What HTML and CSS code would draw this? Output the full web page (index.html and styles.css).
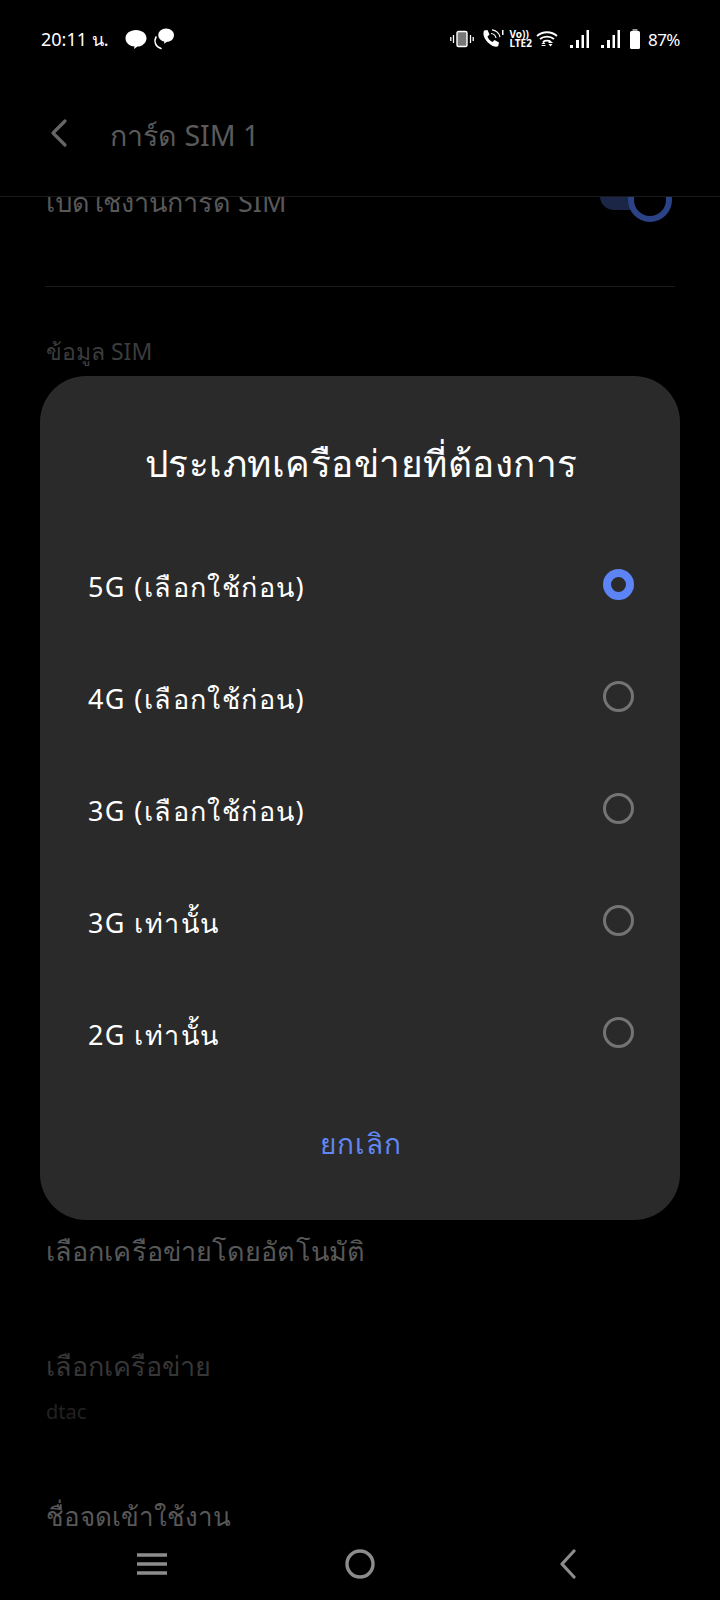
FILE: index.html
```html
<!DOCTYPE html>
<html lang="th">

<head>
    <meta charset="UTF-8">
    <meta name="viewport" content="width=device-width, initial-scale=1.0">
    <title>การ์ด SIM 1</title>
    <link rel="stylesheet" href="styles.css">
</head>

<body>
    <div class="screen">
        <div class="status">
            <div class="status-left">
                <span class="clock">20:11 น.</span>
                <svg class="bubble" width="26" height="24" viewBox="0 0 26 24">
                    <path d="M13 3c6 0 10.500 3.600 10.500 8.200S19 19.500 14.500 19.500l-3.500 2.500.5-2.600C6.500 19 2.500 15.800 2.500 11.200 2.500 6.600 7 3 13 3z" fill="#fff"/>
                </svg>
                <svg class="bubble-two" width="26" height="24" viewBox="0 0 26 24">
                    <path d="M15 1.500c4.700 0 8 3 8 6.700s-3.300 6.500-7 6.600l-3 2 .3-2.300c-3.500-.8-6-3.300-6-6.300 0-3.700 3.300-6.700 7.700-6.700z" fill="#fff"/>
                    <path d="M5 10c-2.500 4.500-.5 9.500 5 11.500" fill="none" stroke="#fff" stroke-width="1.600" stroke-linecap="round"/>
                </svg>
            </div>
            <div class="status-right">
                <svg width="24" height="18" viewBox="0 0 24 18">
                    <rect x="7" y="1.500" width="10" height="15" rx="1.500" fill="#777" stroke="#fff" stroke-width="1.400"/>
                    <path d="M3.500 5v8M.8 7v4M20.500 5v8M23.200 7v4" stroke="#fff" stroke-width="1.300"/>
                </svg>
                <svg class="ic-phone" width="24" height="20" viewBox="0 0 24 20">
                    <path d="M4 1.500 7.500 1l2 4.500L7.500 7.500c.8 2.500 2.500 4.500 5 5.500l2-2 4.500 2.500-.8 3.500C17 18.500 13 18 8.500 14 4 10 2.500 5 4 1.500z" fill="#fff"/>
                    <path d="M11 4.500c2.500.2 4.500 2 5 4.500M12 .9c4 .3 7.400 3.300 8 7.300" fill="none" stroke="#fff" stroke-width="1.200"/>
                    <rect x="22" y="1" width="1.500" height="5" fill="#fff"/>
                </svg>
                <div class="volte"><span>Vo))</span><span>LTE2</span></div>
                <svg class="ic-wifi" width="22" height="20" viewBox="0 0 22 20">
                    <path d="M1 7c5.500-5 14.500-5 20 0M4 10c3.800-3.300 10.200-3.300 14 0M7 13c2.200-1.700 5.800-1.700 8 0" fill="none" stroke="#fff" stroke-width="1.800"/>
                    <path d="M5.500 15h4l-2-2.200zM12.500 15h4l-2 2.500z" fill="#fff"/>
                    <path d="M5.500 16.500h4M12.500 13.500h4" stroke="#fff" stroke-width="1"/>
                </svg>
                <svg class="ic-bars" width="20" height="18" viewBox="0 0 20 18">
                    <path d="M1 15h3v3H1zM7 10h3v8H7zM12.500 5h2.500v13h-2.500zM17.500 0H20v18h-2.500z" fill="#fff"/>
                </svg>
                <svg class="ic-bars-two" width="20" height="18" viewBox="0 0 20 18">
                    <path d="M1 15h3v3H1zM7 10h3v8H7zM12.500 5h2.500v13h-2.500zM17.500 0H20v18h-2.500z" fill="#fff"/>
                </svg>
                <svg class="ic-battery" width="12" height="20" viewBox="0 0 12 20">
                    <path d="M3.500 0h5v2h-5z" fill="#999"/>
                    <rect x="1" y="2" width="10" height="18" rx="1.500" fill="#fff"/>
                </svg>
                <span class="battery">87%</span>
            </div>
        </div>

        <div class="appbar">
            <svg width="20" height="30" viewBox="0 0 20 30">
                <path d="M16 3 4 15l12 12" fill="none" stroke="#666" stroke-width="3.200" stroke-linecap="round" stroke-linejoin="round"/>
            </svg>
            <span class="appbar-title">การ์ด SIM 1</span>
        </div>

        <div class="list">
            <div class="row row-first">
                <span class="row-label">เปิดใช้งานการ์ด SIM</span>
                <div class="switch"><div class="switch-track"></div><div class="switch-thumb"></div></div>
            </div>
            <div class="divider"></div>
            <div class="section">ข้อมูล SIM</div>
            <div class="row-auto row-label">เลือกเครือข่ายโดยอัตโนมัติ</div>
            <div class="row-network">เลือกเครือข่าย</div>
            <div class="row-sub">dtac</div>
            <div class="row-apn row-label">ชื่อจดเข้าใช้งาน</div>
        </div>

        <div class="navbar">
            <svg width="32" height="24" viewBox="0 0 32 24">
                <path d="M1 3h30M1 12h30M1 21h30" stroke="#8c8c8c" stroke-width="3.400"/>
            </svg>
            <svg width="32" height="32" viewBox="0 0 32 32">
                <circle cx="16" cy="16" r="13" fill="none" stroke="#8c8c8c" stroke-width="3.400"/>
            </svg>
            <svg width="22" height="30" viewBox="0 0 22 30">
                <path d="M17 2 5 15l12 13" fill="none" stroke="#8c8c8c" stroke-width="3.200" stroke-linecap="round" stroke-linejoin="round"/>
            </svg>
        </div>

        <div class="dialog">
            <div class="dialog-title">ประเภทเครือข่ายที่ต้องการ</div>
            <div class="options">
                <div class="option"><span>5G (เลือกใช้ก่อน)</span><div class="radio radio-on"></div></div>
                <div class="option"><span>4G (เลือกใช้ก่อน)</span><div class="radio"></div></div>
                <div class="option"><span>3G (เลือกใช้ก่อน)</span><div class="radio"></div></div>
                <div class="option"><span>3G เท่านั้น</span><div class="radio"></div></div>
                <div class="option"><span>2G เท่านั้น</span><div class="radio"></div></div>
            </div>
            <div class="cancel">ยกเลิก</div>
        </div>
    </div>
</body>

</html>
```

FILE: styles.css
```css
* {
    box-sizing: border-box;
}

body {
    margin: 0;
    background: #000;
    font-family: "Noto Sans", "DejaVu Sans", "Liberation Sans", sans-serif;
}

.screen {
    position: relative;
    width: 720px;
    height: 1600px;
    display: flex;
    flex-direction: column;
    overflow: hidden;
    background: #000;
}

/* status bar */
.status {
    height: 78px;
    flex-shrink: 0;
    display: flex;
    justify-content: space-between;
    align-items: center;
    padding: 0 40px 0 41px;
}

.status-left,
.status-right {
    display: flex;
    align-items: center;
}

.clock {
    font-size: 18px;
    color: #fff;
}

.bubble {
    margin-left: 14px;
}

.bubble-two {
    margin-left: 2px;
}

.ic-phone {
    margin-left: 6px;
}

.volte {
    display: flex;
    flex-direction: column;
    margin-left: 5px;
    color: #fff;
    font-size: 10px;
    line-height: 9px;
    font-weight: 700;
}

.ic-wifi {
    margin-left: 4px;
}

.ic-bars {
    margin-left: 11px;
}

.ic-bars-two {
    margin-left: 11px;
}

.ic-battery {
    margin-left: 9px;
}

.battery {
    margin-left: 7px;
    font-size: 17px;
    letter-spacing: -0.5px;
    color: #fff;
}

/* header */
.appbar {
    height: 119px;
    flex-shrink: 0;
    display: flex;
    align-items: center;
    padding: 0 0 8px 49px;
    gap: 41px;
    border-bottom: 1px solid #1a1a1a;
}

.appbar-title {
    padding-top: 6px;
    font-size: 28.500px;
    color: #5a5a5a;
}

/* list behind the dialog */
.list {
    flex: 1;
    min-height: 0;
    overflow: hidden;
    padding: 0 46px;
}

.row-label {
    font-size: 27px;
    color: #585858;
    line-height: 40px;
}

.row-first {
    display: flex;
    justify-content: space-between;
    height: 104px;
    margin-top: -15px;
}

.switch {
    position: relative;
    width: 72px;
    height: 40px;
    margin-top: 2px;
    margin-right: 2px;
}

.switch-track {
    position: absolute;
    left: 0;
    top: 0;
    width: 60px;
    height: 26px;
    border-radius: 0 0 0 14px;
    background: #1b2647;
}

.switch-thumb {
    position: absolute;
    right: 0;
    top: -6px;
    width: 44px;
    height: 44px;
    border-radius: 50%;
    border: 6px solid #2b4286;
    background: #000;
}

.divider {
    height: 1px;
    margin: 0 -1px;
    background: #1a1a1a;
}

.section {
    margin-top: 44px;
    font-size: 23px;
    line-height: 40px;
    color: #3c3c3c;
}

.row-auto {
    margin-top: 860px;
    letter-spacing: 0.1px;
}

.row-network {
    margin-top: 75px;
    font-size: 27px;
    line-height: 40px;
    color: #363636;
}

.row-sub {
    margin-top: 12px;
    font-size: 20px;
    line-height: 28px;
    color: #222;
}

.row-apn {
    margin-top: 70px;
    font-size: 26px;
}

/* nav bar */
.navbar {
    height: 65px;
    flex-shrink: 0;
    display: grid;
    grid-template-columns: repeat(3, 1fr);
    justify-items: center;
    align-items: center;
    padding: 0 48px 8px;
    background: #000;
}

/* dialog sits over the page */
.dialog {
    position: absolute;
    left: 40px;
    top: 376px;
    width: 640px;
    height: 844px;
    border-radius: 46px;
    background: #2a2a2a;
    padding: 0 46px 0 48px;
    display: flex;
    flex-direction: column;
}

.dialog-title {
    margin-top: 57px;
    height: 60px;
    line-height: 60px;
    text-align: center;
    font-size: 37px;
    letter-spacing: 0.5px;
    color: #fff;
}

.options {
    margin-top: 35px;
}

.option {
    height: 112px;
    display: flex;
    justify-content: space-between;
    align-items: center;
    font-size: 27px;
    letter-spacing: 1.400px;
    color: #fff;
}

.option span {
    padding-top: 6px;
}

.radio {
    width: 31px;
    height: 31px;
    border-radius: 50%;
    border: 3px solid #747474;
}

.radio-on {
    border: 8px solid #5d84f5;
}

.cancel {
    margin-top: 35px;
    text-align: center;
    font-size: 28px;
    letter-spacing: 1px;
    line-height: 40px;
    color: #6187f2;
}
```
